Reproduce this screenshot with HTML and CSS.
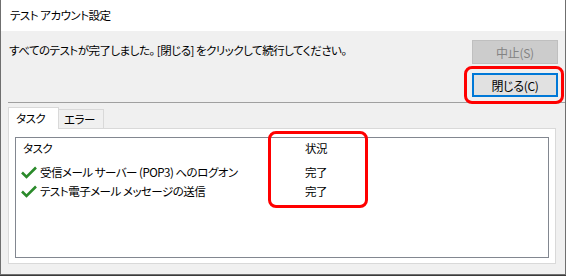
FILE: index.html
```html
<!DOCTYPE html>
<html lang="ja">
<head>
    <meta charset="UTF-8">
    <title>テスト アカウント設定</title>
    <link rel="stylesheet" href="styles.css">
</head>
<body>
    <div class="window">
        <div class="titlebar">テスト アカウント設定</div>

        <div class="client">
            <div class="top">
                <p class="message">すべてのテストが完了しました。 [閉じる] をクリックして続行してください。</p>
                <div class="buttons">
                    <button class="btn" disabled>中止(S)</button>
                    <button class="btn default">閉じる(C)</button>
                </div>
            </div>

            <div class="sep"></div>

            <div class="tab-strip">
                <span class="tab active">タスク</span>
                <span class="tab">エラー</span>
            </div>
            <div class="tab-panel">
                <div class="listbox">
                    <div class="row head">
                        <span class="col-task">タスク</span>
                        <span class="col-status">状況</span>
                    </div>
                    <div class="row">
                        <span class="col-task">
                            <svg class="check" width="16" height="13" viewBox="0 0 16 13"><path d="M1 6.5 L5.5 11 L15 1.5" fill="none" stroke="#2a8a2a" stroke-width="2.6"/></svg>
                            受信メール サーバー (POP3) へのログオン
                        </span>
                        <span class="col-status">完了</span>
                    </div>
                    <div class="row">
                        <span class="col-task">
                            <svg class="check" width="16" height="13" viewBox="0 0 16 13"><path d="M1 6.5 L5.5 11 L15 1.5" fill="none" stroke="#2a8a2a" stroke-width="2.6"/></svg>
                            テスト電子メール メッセージの送信
                        </span>
                        <span class="col-status">完了</span>
                    </div>
                </div>
            </div>
        </div>

        <!-- annotation highlights -->
        <div class="mark mark-close"></div>
        <div class="mark mark-status"></div>
    </div>
</body>
</html>
```

FILE: styles.css
```css
* {
    box-sizing: border-box;
    margin: 0;
    padding: 0;
}

body {
    font-family: "Noto Sans CJK JP", "Noto Sans", sans-serif;
    font-size: 11.5px;
    letter-spacing: -0.5px;
    font-feature-settings: "palt";
    color: #000;
    background: #3a3a3a;
    width: 566px;
    height: 276px;
    overflow: hidden;
}

.window {
    position: relative;
    width: 566px;
    height: 275px;
    border: 1px solid #6f6f6f;
    border-top: none;
    background: #f0f0f0;
}

.titlebar {
    height: 31px;
    line-height: 31px;
    padding-left: 9px;
    background: #fff;
}

.client {
    padding: 9px 7px 0 7px;
}

.top {
    display: flex;
    justify-content: space-between;
}

.message {
    padding: 2px 0 0 1px;
    line-height: 16px;
}

.buttons {
    display: flex;
    flex-direction: column;
    gap: 9px;
}

.btn {
    width: 86px;
    height: 24px;
    font-family: inherit;
    font-size: 12px;
    letter-spacing: -0.3px;
    font-feature-settings: "palt";
    background: #e1e1e1;
    border: 1px solid #adadad;
    color: #000;
}

.btn:disabled {
    background: #cccccc;
    border-color: #bfbfbf;
    color: #838383;
}

.btn.default {
    border: 2px solid #0078d7;
}

.sep {
    height: 1px;
    background: #a0a0a0;
    margin: 5px -7px 0 0;
}

.tab-strip {
    display: flex;
    align-items: flex-end;
    margin-top: 4px;
    height: 21px;
}

.tab {
    height: 19px;
    line-height: 18px;
    white-space: nowrap;
    border: 1px solid #d9d9d9;
    border-bottom: none;
    background: #f0f0f0;
}

.tab.active {
    width: 51px;
    height: 22px;
    line-height: 20px;
    padding-left: 7px;
    background: #fff;
    margin-bottom: -1px;
    position: relative;
    z-index: 1;
}

.tab + .tab {
    width: 45px;
    border-left: none;
    padding-left: 5px;
}

.tab-panel {
    width: 548px;
    height: 136px;
    border: 1px solid #d9d9d9;
    background: #fff;
    padding: 8px 6px 5px 6px;
}

.listbox {
    height: 100%;
    border: 1px solid #828790;
    padding-top: 1px;
}

.row {
    display: grid;
    grid-template-columns: 289px 1fr;
    height: 19px;
    line-height: 19px;
    white-space: nowrap;
}

.row.head {
    margin-bottom: 5px;
}

.col-task {
    display: flex;
    align-items: center;
    padding-left: 5px;
}

.head .col-task {
    padding-left: 7px;
}

.check {
    margin-right: 3px;
}

.mark {
    position: absolute;
    border: 3px solid #ff0000;
    border-radius: 8px;
}

.mark-close {
    left: 463px;
    top: 66px;
    width: 100px;
    height: 38px;
}

.mark-status {
    left: 267px;
    top: 131px;
    width: 100px;
    height: 77px;
}
```
